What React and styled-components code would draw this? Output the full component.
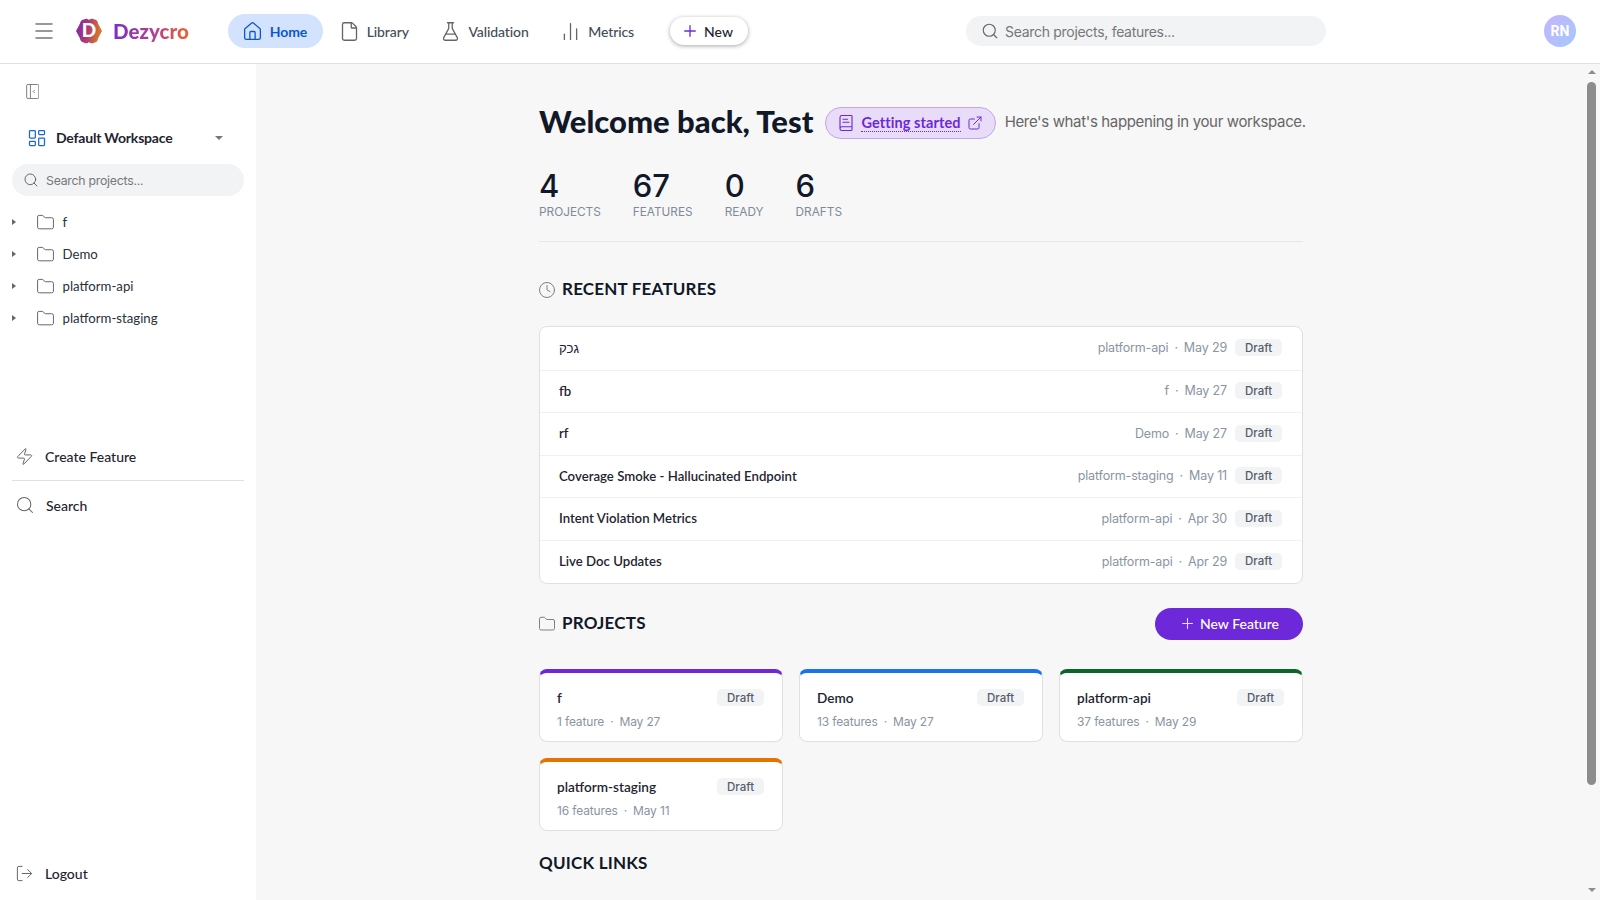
import React from "react";
import styled, { createGlobalStyle } from "styled-components";
import {
  BookText,
  ChartNoAxesColumn,
  Clock,
  ExternalLink,
  File,
  FlaskConical,
  Folder,
  House,
  LayoutDashboard,
  LogOut,
  Menu,
  Plus,
  Search,
  Zap,
} from "lucide-react";

const HEAD = `"Lato", "Noto Sans", "Liberation Sans", sans-serif`;
const BODY = `"Inter", "Noto Sans", "Liberation Sans", sans-serif`;

const GlobalStyle = createGlobalStyle`
  html, body, #root {
    height: 100%;
    margin: 0;
    overflow: hidden;
  }
  body {
    font-family: ${BODY};
    background: #f7f7f7;
  }
  * {
    box-sizing: border-box;
  }
`;

const Whole = styled.div`
  height: 100vh;
  display: flex;
  flex-direction: column;
`;

/* top bar */
const TopBar = styled.header`
  height: 64px;
  flex: none;
  display: flex;
  align-items: center;
  padding: 0 24px 1px 32px;
  background: #fff;
  border-bottom: 1px solid #e0e0e0;
  color: #777;
`;

const LogoBox = styled.div`
  display: flex;
  align-items: center;
  gap: 11px;
  margin-left: 20px;
  margin-right: 39px;
`;

const LogoText = styled.span`
  font-family: ${HEAD};
  font-size: 20.5px;
  font-weight: 900;
  line-height: 30px;
  background: linear-gradient(90deg, #7b2fc4 0%, #b5408e 55%, #ea642a 100%);
  -webkit-background-clip: text;
  background-clip: text;
  color: transparent;
`;

const Nav = styled.nav`
  display: flex;
  align-items: center;
  gap: 1.5px;
`;

const NavItem = styled.a`
  height: 34px;
  display: flex;
  align-items: center;
  gap: 7px;
  padding: 0 16px 0 14px;
  border-radius: 17px;
  font-family: ${HEAD};
  font-size: 14px;
  letter-spacing: -0.1px;
  font-weight: ${(props) => (props.$active ? 700 : 500)};
  color: ${(props) => (props.$active ? "#0b57d0" : "#444c58")};
  background: ${(props) => (props.$active ? "#d3e3fd" : "transparent")};
  svg {
    color: ${(props) => (props.$active ? "#0b57d0" : "#666")};
  }
`;

const NewBtn = styled.button`
  height: 28px;
  margin-left: 20px;
  padding: 0 15px 0 11px;
  display: flex;
  align-items: center;
  gap: 5px;
  border: none;
  border-radius: 14px;
  background: #fff;
  box-shadow: 0 1px 4px rgba(0, 0, 0, 0.35);
  font-family: ${HEAD};
  font-size: 14px;
  font-weight: 500;
  color: #1f2430;
  svg {
    color: #6d28d9;
  }
`;

const TopSearch = styled.label`
  width: 360px;
  height: 30px;
  margin-left: auto;
  margin-right: 218px;
  padding: 0 15px;
  display: flex;
  align-items: center;
  gap: 6px;
  border-radius: 15px;
  background: #f1f3f5;
  color: #666;
`;

const SearchInput = styled.input`
  flex: 1;
  min-width: 0;
  border: none;
  outline: none;
  padding: 0;
  background: transparent;
  font-family: ${BODY};
  font-size: ${(props) => props.$size};
  letter-spacing: ${(props) => props.$spacing};
  color: #666;
  &::placeholder {
    color: #777;
    opacity: 1;
  }
`;

const Avatar = styled.div`
  width: 32px;
  height: 32px;
  border-radius: 50%;
  flex: none;
  display: flex;
  align-items: center;
  justify-content: center;
  background: linear-gradient(135deg, #c6b4fb, #a3c9ff);
  color: #fff;
  font-family: "Roboto", sans-serif;
  font-size: 14px;
  font-weight: 700;
`;

/* sidebar */
const Row = styled.div`
  flex: 1;
  min-height: 0;
  display: flex;
`;

const Sidebar = styled.aside`
  width: 256px;
  flex: none;
  display: flex;
  flex-direction: column;
  padding: 0 12px;
  background: #fff;
`;

const CollapseBtn = styled.div`
  height: 16px;
  display: flex;
  margin: 20px 0 0 13.5px;
  color: #777;
`;

const WorkspaceRow = styled.div`
  height: 21px;
  margin-top: 27px;
  padding: 0 21px 0 15px;
  display: flex;
  align-items: center;
  gap: 9px;
  font-family: ${HEAD};
  font-size: 14px;
  letter-spacing: -0.2px;
  font-weight: 700;
  color: #1f2430;
  svg {
    color: #1a66d9;
  }
`;

const Caret = styled.span`
  width: 0;
  height: 0;
  flex: none;
  margin-left: auto;
  border-left: 4px solid transparent;
  border-right: 4px solid transparent;
  border-top: 4px solid #777;
`;

const TreeCaret = styled.span`
  width: 0;
  height: 0;
  flex: none;
  border-top: 3.5px solid transparent;
  border-bottom: 3.5px solid transparent;
  border-left: 4px solid #666;
`;

const SideSearch = styled.label`
  height: 32px;
  margin-top: 16px;
  padding: 0 11px;
  display: flex;
  align-items: center;
  gap: 7px;
  border-radius: 16px;
  background: #f1f3f5;
  color: #666;
`;

const Tree = styled.div`
  margin-top: 10px;
`;

const TreeRow = styled.div`
  height: 32px;
  display: flex;
  align-items: center;
  font-family: ${HEAD};
  font-size: 13.2px;
  color: #2b303a;
  svg {
    color: #666;
    margin: 0 7.5px 0 20px;
  }
`;

const SideAction = styled.div`
  height: 24px;
  padding-left: 3px;
  display: flex;
  align-items: center;
  gap: 11px;
  font-family: ${HEAD};
  font-size: 14px;
  font-weight: 500;
  color: #1f2430;
  margin-top: ${(props) => props.$top || "0"};
  margin-bottom: ${(props) => props.$bottom || "0"};
  svg {
    color: #666;
  }
`;

const SideDivider = styled.hr`
  width: 100%;
  height: 1px;
  margin: 12px 0;
  border: none;
  background: #e0e0e0;
`;

/* main */
const Main = styled.main`
  flex: 1;
  min-width: 0;
  overflow: hidden;
  padding-left: 3px;
  background: #f7f7f7;
`;

const ScrollRail = styled.div`
  width: 17px;
  flex: none;
  padding-top: 6px;
  display: flex;
  flex-direction: column;
  align-items: center;
  background: #f7f7f7;
`;

const ScrollArrow = styled.span`
  width: 0;
  height: 0;
  border-left: 4px solid transparent;
  border-right: 4px solid transparent;
  border-bottom: ${(props) => (props.$down ? "none" : "4px solid #8c8c8c")};
  border-top: ${(props) => (props.$down ? "4px solid #8c8c8c" : "none")};
  margin-top: ${(props) => (props.$down ? "auto" : "0")};
  margin-bottom: ${(props) => (props.$down ? "8px" : "0")};
`;

const ScrollThumb = styled.div`
  width: 9px;
  height: 703px;
  margin-top: 8px;
  border-radius: 5px;
  background: #8c8c8c;
`;

const Content = styled.div`
  width: 764px;
  margin: 0 auto;
  padding-top: 41px;
`;

const WelcomeRow = styled.div`
  height: 32px;
  display: flex;
  align-items: center;
`;

const Title = styled.h1`
  margin: 0;
  font-family: ${HEAD};
  font-size: 31px;
  font-weight: 900;
  color: #111827;
  white-space: nowrap;
`;

const GuidePill = styled.a`
  height: 32px;
  margin: 3px 0 0 12px;
  padding: 0 12px 0 11px;
  display: flex;
  align-items: center;
  gap: 6px;
  border: 1px solid #c3a5f0;
  border-radius: 16px;
  background: #e8dcf8;
  color: #6d28d9;
  font-family: ${HEAD};
  font-size: 14.5px;
  letter-spacing: 0.1px;
  font-weight: 700;
  white-space: nowrap;
`;

const GuideText = styled.span`
  border-bottom: 1px dotted #6d28d9;
`;

const WelcomeSub = styled.span`
  margin-left: 9px;
  font-family: ${BODY};
  font-size: 15px;
  letter-spacing: -0.35px;
  color: #666;
  white-space: nowrap;
`;

const Stats = styled.div`
  margin-top: 30.5px;
  padding-bottom: 21.5px;
  display: flex;
  gap: 32px;
  border-bottom: 1px solid #e8e8e8;
`;

const StatNum = styled.div`
  font-family: ${BODY};
  font-size: 31px;
  font-weight: 500;
  line-height: 36px;
  color: #111827;
`;

const StatLabel = styled.div`
  font-family: ${BODY};
  font-size: 11.8px;
  line-height: 16px;
  color: #7f8a9a;
`;

const SectionHead = styled.div`
  height: 32px;
  display: flex;
  align-items: center;
  gap: 6.5px;
  margin-top: ${(props) => props.$top};
  svg {
    color: #777;
    margin-left: -1.5px;
  }
`;

const SectionTitle = styled.h2`
  margin: 0 0 3px;
  font-family: ${HEAD};
  font-size: 17px;
  font-weight: 700;
  letter-spacing: 0.2px;
  color: #111827;
`;

const FeatureList = styled.div`
  margin-top: 20px;
  border: 1px solid #e0e0e0;
  border-radius: 8px;
  background: #fff;
  overflow: hidden;
`;

const FeatureRow = styled.div`
  height: 42.6px;
  display: flex;
  align-items: center;
  padding: 0 20px 1.5px 19px;
  border-top: ${(props) => (props.$first ? "none" : "1px solid #f0f0f0")};
`;

const FeatureName = styled.span`
  font-family: ${HEAD};
  font-size: 13.2px;
  font-weight: ${(props) => (props.$light ? 400 : 600)};
  color: #1f2430;
`;

const Meta = styled.span`
  margin-left: ${(props) => props.$left || "0"};
  font-family: ${BODY};
  font-size: ${(props) => props.$size};
  letter-spacing: -0.15px;
  color: #8a94a3;
  white-space: nowrap;
`;

const Dot = styled.span`
  margin: 0 6px;
`;

const Badge = styled.span`
  width: 47px;
  height: 17px;
  flex: none;
  margin-left: ${(props) => props.$left || "0"};
  display: flex;
  align-items: center;
  justify-content: center;
  border-radius: 5px;
  background: #f1f3f5;
  font-family: ${BODY};
  font-size: 11.5px;
  font-weight: 500;
  color: #555d6b;
`;

const NewFeatureBtn = styled.button`
  width: 148px;
  height: 32px;
  margin-left: auto;
  display: flex;
  align-items: center;
  justify-content: center;
  gap: 4px;
  border: none;
  border-radius: 16px;
  background: #6d28d9;
  color: #fff;
  font-family: ${HEAD};
  font-size: 14px;
  font-weight: 500;
  svg {
    color: #e6dcf8;
    margin-left: 0;
  }
`;

const ProjectGrid = styled.div`
  margin-top: 29px;
  display: grid;
  grid-template-columns: repeat(3, 1fr);
  gap: 16px;
`;

const ProjectCard = styled.div`
  height: 73px;
  padding: 13px 18px 0 17px;
  border: 1px solid #e0e0e0;
  border-top: 4px solid ${(props) => props.$color};
  border-radius: 8px;
  background: #fff;
`;

const CardTop = styled.div`
  height: 24px;
  display: flex;
  align-items: center;
  justify-content: space-between;
`;

const CardName = styled.span`
  font-family: ${HEAD};
  font-size: 13.6px;
  font-weight: 600;
  color: #1f2430;
`;

const CardMeta = styled.div`
  line-height: 20px;
`;

const QuickHead = styled(SectionTitle)`
  margin: 20px 0 0;
  line-height: 24px;
`;

const features = [
  { name: "גכק", project: "platform-api", date: "May 29", light: true },
  { name: "fb", project: "f", date: "May 27" },
  { name: "rf", project: "Demo", date: "May 27" },
  { name: "Coverage Smoke - Hallucinated Endpoint", project: "platform-staging", date: "May 11" },
  { name: "Intent Violation Metrics", project: "platform-api", date: "Apr 30" },
  { name: "Live Doc Updates", project: "platform-api", date: "Apr 29" },
];

const projects = [
  { name: "f", count: "1 feature", date: "May 27", color: "#6d28d9" },
  { name: "Demo", count: "13 features", date: "May 27", color: "#1a73e8" },
  { name: "platform-api", count: "37 features", date: "May 29", color: "#0d652d" },
  { name: "platform-staging", count: "16 features", date: "May 11", color: "#e37400" },
];

const stats = [
  { num: 4, label: "PROJECTS" },
  { num: 67, label: "FEATURES" },
  { num: 0, label: "READY" },
  { num: 6, label: "DRAFTS" },
];

const LogoMark = () => (
  <svg width="26" height="26" viewBox="0 0 26 26">
    <defs>
      <linearGradient id="logoGrad" x1="0" y1="0" x2="1" y2="0.2">
        <stop offset="0" stopColor="#7a2aa8" />
        <stop offset="0.5" stopColor="#a83a78" />
        <stop offset="1" stopColor="#d9782a" />
      </linearGradient>
    </defs>
    <path
      d="M8 1.5 C10 0 12 0.8 13 2 C14 0.8 16.5 0 18.5 1.5 C20.5 1.5 22 3.5 22 5.5 L26 13 L22 20.5 C22 22.5 20.5 24.5 18.5 24.5 C16.5 26 14 25.2 13 24 C12 25.2 10 26 8 24.5 C6 24.5 4 22.5 4 20.5 L0 13 L4 5.5 C4 3.5 6 1.5 8 1.5 Z"
      fill="url(#logoGrad)"
    />
    <text x="13" y="19" textAnchor="middle" fontFamily="Lato, sans-serif" fontWeight="900" fontSize="19" fill="#fff">
      D
    </text>
  </svg>
);

const CollapseIcon = () => (
  <svg width="13.5" height="15" viewBox="0 0 14 16" fill="none" stroke="currentColor" strokeWidth="1">
    <rect x="0.5" y="0.5" width="13" height="15" rx="1.5" />
    <path d="M4.5 0.5 V15.5" />
    <path d="M9 6.5 L7.5 8 L9 9.5" />
  </svg>
);

const App = () => {
  return (
    <Whole>
      <GlobalStyle />
      <TopBar>
        <Menu size={24} strokeWidth={1.5} />
        <LogoBox>
          <LogoMark />
          <LogoText>Dezycro</LogoText>
        </LogoBox>
        <Nav>
          <NavItem $active>
            <House size={21} strokeWidth={1.5} />
            Home
          </NavItem>
          <NavItem>
            <File size={21} strokeWidth={1.5} />
            Library
          </NavItem>
          <NavItem>
            <FlaskConical size={21} strokeWidth={1.5} />
            Validation
          </NavItem>
          <NavItem>
            <ChartNoAxesColumn size={21} strokeWidth={1.5} />
            Metrics
          </NavItem>
        </Nav>
        <NewBtn>
          <Plus size={18} strokeWidth={1.75} />
          New
        </NewBtn>
        <TopSearch>
          <Search size={18} strokeWidth={1.5} />
          <SearchInput $size="14px" $spacing="-0.3px" placeholder="Search projects, features..." />
        </TopSearch>
        <Avatar>RN</Avatar>
      </TopBar>

      <Row>
        <Sidebar>
          <CollapseBtn>
            <CollapseIcon />
          </CollapseBtn>
          <WorkspaceRow>
            <LayoutDashboard size={20} strokeWidth={1.5} />
            Default Workspace
            <Caret />
          </WorkspaceRow>
          <SideSearch>
            <Search size={16} strokeWidth={1.5} />
            <SearchInput $size="12.3px" $spacing="-0.25px" placeholder="Search projects..." />
          </SideSearch>
          <Tree>
            {projects.map((p) => (
              <TreeRow key={p.name}>
                <TreeCaret />
                <Folder size={19} strokeWidth={1.25} />
                {p.name}
              </TreeRow>
            ))}
          </Tree>
          <SideAction $top="110px">
            <Zap size={19} strokeWidth={1.25} />
            Create Feature
          </SideAction>
          <SideDivider />
          <SideAction>
            <Search size={20} strokeWidth={1.25} />
            Search
          </SideAction>
          <SideAction $top="auto" $bottom="15px">
            <LogOut size={19} strokeWidth={1.25} />
            Logout
          </SideAction>
        </Sidebar>

        <Main>
          <Content>
            <WelcomeRow>
              <Title>Welcome back, Test</Title>
              <GuidePill>
                <BookText size={18} strokeWidth={1.5} />
                <GuideText>Getting started</GuideText>
                <ExternalLink size={16} strokeWidth={1.5} />
              </GuidePill>
              <WelcomeSub>Here's what's happening in your workspace.</WelcomeSub>
            </WelcomeRow>

            <Stats>
              {stats.map((s) => (
                <div key={s.label}>
                  <StatNum>{s.num}</StatNum>
                  <StatLabel>{s.label}</StatLabel>
                </div>
              ))}
            </Stats>

            <SectionHead $top="32px">
              <Clock size={18} strokeWidth={1.25} />
              <SectionTitle>RECENT FEATURES</SectionTitle>
            </SectionHead>
            <FeatureList>
              {features.map((f, i) => (
                <FeatureRow key={f.name} $first={i === 0}>
                  <FeatureName $light={f.light}>{f.name}</FeatureName>
                  <Meta $left="auto" $size="12.5px">
                    {f.project}
                    <Dot>·</Dot>
                    {f.date}
                  </Meta>
                  <Badge $left="8px">Draft</Badge>
                </FeatureRow>
              ))}
            </FeatureList>

            <SectionHead $top="24px">
              <Folder size={18} strokeWidth={1.25} />
              <SectionTitle>PROJECTS</SectionTitle>
              <NewFeatureBtn>
                <Plus size={17} strokeWidth={1.5} />
                New Feature
              </NewFeatureBtn>
            </SectionHead>
            <ProjectGrid>
              {projects.map((p) => (
                <ProjectCard key={p.name} $color={p.color}>
                  <CardTop>
                    <CardName>{p.name}</CardName>
                    <Badge>Draft</Badge>
                  </CardTop>
                  <CardMeta>
                    <Meta $size="12px">
                      {p.count}
                      <Dot>·</Dot>
                      {p.date}
                    </Meta>
                  </CardMeta>
                </ProjectCard>
              ))}
            </ProjectGrid>

            <QuickHead>QUICK LINKS</QuickHead>
          </Content>
        </Main>

        <ScrollRail>
          <ScrollArrow />
          <ScrollThumb />
          <ScrollArrow $down />
        </ScrollRail>
      </Row>
    </Whole>
  );
};

export default App;
